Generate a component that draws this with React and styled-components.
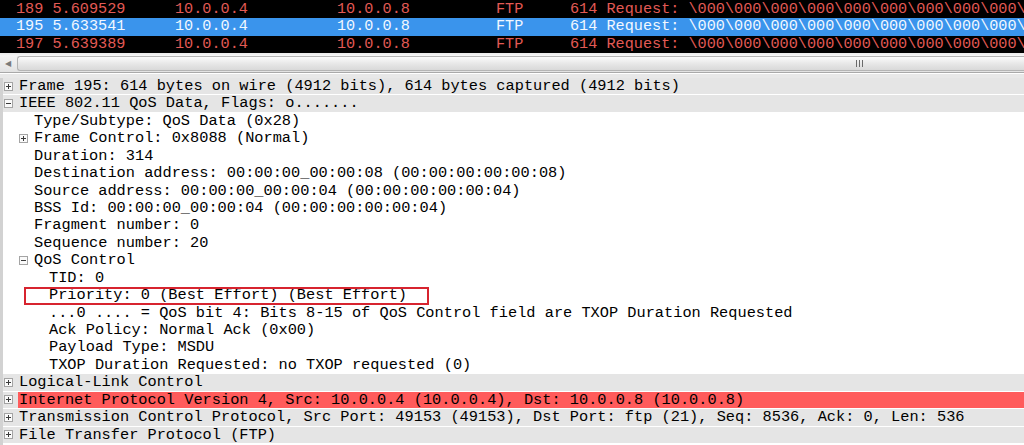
import React from "react";
import styled, { createGlobalStyle } from "styled-components";

const Global = createGlobalStyle`
  html, body { margin: 0; padding: 0; background: #ffffff; overflow: hidden; }
  body { font-family: "Liberation Mono", "DejaVu Sans Mono", monospace; font-size: 15px; }
`;

const Page = styled.div`
  width: 1024px;
  height: 445px;
  display: flex;
  flex-direction: column;
  overflow: hidden;
  background: #ececec;
`;

const PacketList = styled.div`
  background: #000;
  display: flex;
  flex-direction: column;
  padding-top: 1px;
`;

const PacketRow = styled.div`
  height: 17.3px;
  line-height: 17.3px;
  display: grid;
  grid-template-columns: 159px 162px 159px 74px 1fr;
  padding-left: 16px;
  white-space: nowrap;
  overflow: hidden;
  font-size: 15.2px;
  background: ${(p) => (p.$selected ? "#3a94ec" : "#000000")};
  color: ${(p) => (p.$selected ? "#f2f8ff" : "#e25a55")};
`;

const Cell = styled.span`
  overflow: hidden;
`;

const ScrollBar = styled.div`
  margin-top: 1px;
  height: 17px;
  display: flex;
  background: linear-gradient(#f6f6f6, #e2e2e2);
  border-top: 1px solid #f0f0f0;
  border-bottom: 1px solid #a9a9a9;
`;

const ArrowBtn = styled.div`
  width: 16px;
  display: flex;
  align-items: center;
  justify-content: center;
  color: #7a7a7a;
  font-size: 8px;
  font-family: "DejaVu Sans", sans-serif;
`;

const Thumb = styled.div`
  flex: 1;
  margin: 1px 0 1px 1px;
  border: 1px solid #b4b4b4;
  border-right: none;
  border-radius: 3px 0 0 3px;
  background: linear-gradient(#fbfbfb, #e6e6e6 55%, #d9d9d9);
  display: flex;
  align-items: center;
  padding-left: 838px;
`;

const Grip = styled.div`
  display: flex;
  gap: 2px;
  span {
    width: 1px;
    height: 7px;
    background: #6a6a6a;
  }
`;

const Spacer = styled.div`
  height: 4px;
  border-top: 1px solid #ffffff;
  background: #e8e8e8;
`;

const Tree = styled.div`
  flex: 1;
  display: flex;
  flex-direction: column;
  background: #ffffff;
  border-left: 3px solid #d2d2d2;
  color: #000;
  font-size: 15.3px;
`;

const Row = styled.div`
  position: relative;
  height: 17.45px;
  line-height: 17.45px;
  box-sizing: border-box;
  display: flex;
  align-items: stretch;
  white-space: nowrap;
  padding-left: ${(p) => 1 + p.$level * 15}px;
  background: ${(p) => (p.$level === 0 ? "#e5e5e5" : "#ffffff")};
  border-bottom: ${(p) => (p.$level === 0 ? "1px solid #ffffff" : "none")};
`;

const ToggleSlot = styled.span`
  width: 14px;
  flex: none;
  display: flex;
  align-items: center;
`;

const Toggle = styled.span`
  position: relative;
  width: 7px;
  height: 7px;
  border: 1px solid #a4a4a4;
  background: #fafafa;
  &::before {
    content: "";
    position: absolute;
    left: 1px;
    top: 3px;
    width: 5px;
    height: 1px;
    background: #3a3a3a;
  }
  &::after {
    content: "";
    display: ${(p) => (p.$open ? "none" : "block")};
    position: absolute;
    left: 3px;
    top: 1px;
    width: 1px;
    height: 5px;
    background: #3a3a3a;
  }
`;

const Label = styled.span`
  flex: 1;
  padding-left: 1px;
  background: ${(p) => (p.$highlight ? "#ff5b5b" : "transparent")};
`;

const Annotation = styled.div`
  position: absolute;
  left: 21px;
  top: 0;
  width: 405px;
  height: 100%;
  box-sizing: border-box;
  border: 2px solid #d7242f;
  pointer-events: none;
`;

const info = "614 Request: " + "\\000".repeat(40);

const packets = [
  { no: "189 5.609529", src: "10.0.0.4", dst: "10.0.0.8", proto: "FTP", info },
  { no: "195 5.633541", src: "10.0.0.4", dst: "10.0.0.8", proto: "FTP", info, selected: true },
  { no: "197 5.639389", src: "10.0.0.4", dst: "10.0.0.8", proto: "FTP", info },
];

const rows = [
  { l: 0, t: "closed", text: "Frame 195: 614 bytes on wire (4912 bits), 614 bytes captured (4912 bits)" },
  { l: 0, t: "open", text: "IEEE 802.11 QoS Data, Flags: o......." },
  { l: 1, text: "Type/Subtype: QoS Data (0x28)" },
  { l: 1, t: "closed", text: "Frame Control: 0x8088 (Normal)" },
  { l: 1, text: "Duration: 314" },
  { l: 1, text: "Destination address: 00:00:00_00:00:08 (00:00:00:00:00:08)" },
  { l: 1, text: "Source address: 00:00:00_00:00:04 (00:00:00:00:00:04)" },
  { l: 1, text: "BSS Id: 00:00:00_00:00:04 (00:00:00:00:00:04)" },
  { l: 1, text: "Fragment number: 0" },
  { l: 1, text: "Sequence number: 20" },
  { l: 1, t: "open", text: "QoS Control" },
  { l: 2, text: "TID: 0" },
  { l: 2, text: "Priority: 0 (Best Effort) (Best Effort)", boxed: true },
  { l: 2, text: "...0 .... = QoS bit 4: Bits 8-15 of QoS Control field are TXOP Duration Requested" },
  { l: 2, text: "Ack Policy: Normal Ack (0x00)" },
  { l: 2, text: "Payload Type: MSDU" },
  { l: 2, text: "TXOP Duration Requested: no TXOP requested (0)" },
  { l: 0, t: "closed", text: "Logical-Link Control" },
  { l: 0, t: "closed", hl: true, text: "Internet Protocol Version 4, Src: 10.0.0.4 (10.0.0.4), Dst: 10.0.0.8 (10.0.0.8)" },
  { l: 0, t: "closed", text: "Transmission Control Protocol, Src Port: 49153 (49153), Dst Port: ftp (21), Seq: 8536, Ack: 0, Len: 536" },
  { l: 0, t: "closed", text: "File Transfer Protocol (FTP)" },
];

export default function App() {
  return (
    <Page>
      <Global />
      <PacketList>
        {packets.map((p) => (
          <PacketRow key={p.no} $selected={p.selected}>
            <Cell>{p.no}</Cell>
            <Cell>{p.src}</Cell>
            <Cell>{p.dst}</Cell>
            <Cell>{p.proto}</Cell>
            <Cell>{p.info}</Cell>
          </PacketRow>
        ))}
      </PacketList>
      <ScrollBar>
        <ArrowBtn>◀</ArrowBtn>
        <Thumb>
          <Grip>
            <span />
            <span />
            <span />
          </Grip>
        </Thumb>
      </ScrollBar>
      <Spacer />
      <Tree>
        {rows.map((r, i) => (
          <Row key={i} $level={r.l}>
            <ToggleSlot>{r.t && <Toggle $open={r.t === "open"} />}</ToggleSlot>
            <Label $highlight={r.hl}>{r.text}</Label>
            {r.boxed && <Annotation />}
          </Row>
        ))}
      </Tree>
    </Page>
  );
}
